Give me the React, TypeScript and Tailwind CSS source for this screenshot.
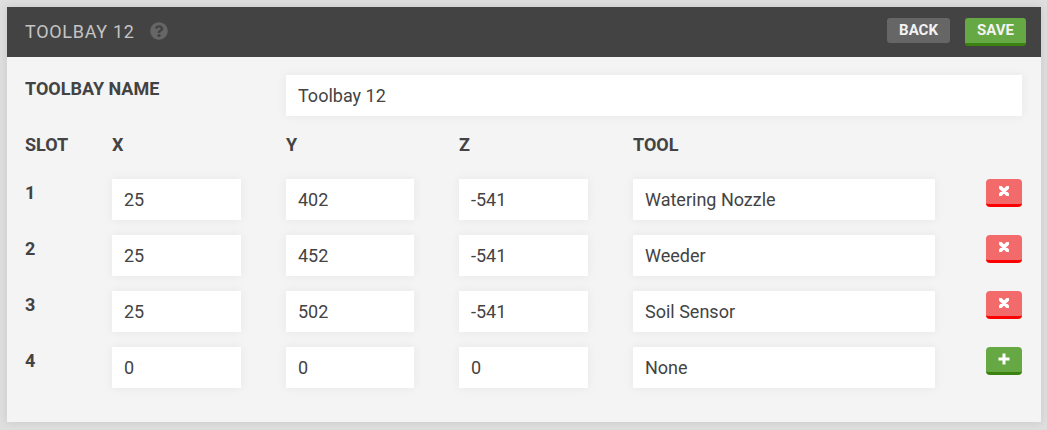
import React from "react";
import { FaQuestionCircle } from "react-icons/fa";

interface Slot {
  slot: number;
  x: number;
  y: number;
  z: number;
  tool: string;
}

const slots: Slot[] = [
  { slot: 1, x: 25, y: 402, z: -541, tool: "Watering Nozzle" },
  { slot: 2, x: 25, y: 452, z: -541, tool: "Weeder" },
  { slot: 3, x: 25, y: 502, z: -541, tool: "Soil Sensor" },
  { slot: 4, x: 0, y: 0, z: 0, tool: "None" },
];

const Field: React.FC<{ value: string | number; className: string }> = ({ value, className }) => (
  <div
    className={`h-[41px] bg-white pl-[12px] flex items-center text-[18px] text-[#434343] shadow-[0_0_10px_rgba(0,0,0,0.06)] ${className}`}
  >
    {value}
  </div>
);

const App: React.FC = () => {
  return (
    <div className="h-[430px] bg-[#dedede] p-[7px] font-['Roboto',sans-serif]">
      <div className="h-[415px] w-[1034px] bg-[#f4f4f4] shadow-[0_0_8px_rgba(0,0,0,0.1)]">
        {/* Header */}
        <div className="h-[50px] bg-[#434343] flex items-center pl-[18px] pr-[15px]">
          <span className="text-[18px] tracking-[0.7px] text-[#c4c4c4] pb-[2px]">TOOLBAY 12</span>
          <FaQuestionCircle className="ml-[15px] mb-[2px] text-[#666666]" size={18} />
          <div className="ml-auto flex items-start gap-[15px]">
            <button className="w-[63px] h-[25px] rounded-[3px] bg-[#666666] text-[15px] font-bold text-[#f3f3f3] flex items-center justify-center">
              BACK
            </button>
            <button className="w-[61px] h-[28px] pb-[1px] rounded-[3px] bg-[#66a843] border-b-[3px] border-[#3c8211] text-[15px] font-bold text-[#f3f3f3] flex items-center justify-center">
              SAVE
            </button>
          </div>
        </div>

        {/* Body */}
        <div className="pl-[18px] pr-[19px] pt-[18px]">
          <div className="flex items-start">
            <div className="w-[261px] pt-[1px] text-[18px] font-bold leading-[26px] text-[#434343]">TOOLBAY NAME</div>
            <Field value="Toolbay 12" className="w-[736px]" />
          </div>

          <div className="flex mt-[15px] h-[26px] items-center text-[18px] font-bold text-[#434343]">
            <div className="w-[87px]">SLOT</div>
            <div className="w-[174px]">X</div>
            <div className="w-[173px]">Y</div>
            <div className="w-[174px]">Z</div>
            <div>TOOL</div>
          </div>

          <div className="mt-[22px] flex flex-col gap-[15px]">
            {slots.map((s) => (
              <div key={s.slot} className="flex items-start">
                <div className="w-[87px] pt-[1px] text-[18px] font-bold leading-[26px] text-[#434343]">{s.slot}</div>
                <Field value={s.x} className="w-[129px] mr-[45px]" />
                <Field value={s.y} className="w-[128px] mr-[45px]" />
                <Field value={s.z} className="w-[129px] mr-[45px]" />
                <Field value={s.tool} className="w-[302px] mr-[51px]" />
                <button
                  className={`w-[36px] h-[28px] pb-[1px] rounded-[4px] border-b-[3px] flex items-center justify-center text-white ${
                    s.tool === "None" ? "bg-[#66a843] border-[#3c8211]" : "bg-[#f26a6a] border-[#ff0000]"
                  }`}
                >
                  {s.tool === "None" ? (
                    <svg width="12" height="12" viewBox="0 0 12 12">
                      <path d="M6 0.5V11.5M0.5 6H11.5" stroke="currentColor" strokeWidth="3" />
                    </svg>
                  ) : (
                    <svg width="10" height="10" viewBox="0 0 10 10">
                      <path d="M1.5 1.5L8.5 8.5M8.5 1.5L1.5 8.5" stroke="currentColor" strokeWidth="3.8" strokeLinecap="round" />
                    </svg>
                  )}
                </button>
              </div>
            ))}
          </div>
        </div>
      </div>
    </div>
  );
};

export default App;
